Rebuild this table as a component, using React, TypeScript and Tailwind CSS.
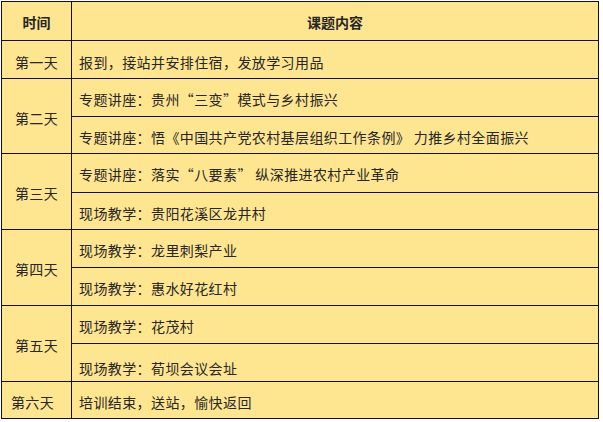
import React from "react";

const font = { fontFamily: '"Noto Sans CJK SC", "Noto Sans", sans-serif' };

function Cell({ children, className = "" }: { children?: React.ReactNode; className?: string }) {
  return <div className={`bg-[#fee590] flex items-center text-[14px] text-[#262626] tracking-[0.4px] ${className}`}>{children}</div>;
}

export default function App() {
  return (
    <div className="w-[603px] h-[422px] bg-white pt-px pl-px" style={font}>
      <div className="w-[598px] bg-[#111] p-px gap-px grid grid-cols-[69px_526px] grid-rows-[38px_37px_37px_36px_38px_36px_37px_37px_37px_37px_36px] leading-none">
        <Cell className="justify-center font-bold pt-px tracking-[0px]">时间</Cell>
        <Cell className="justify-center font-bold pt-px tracking-[0px]">课题内容</Cell>

        <Cell className="justify-center pt-[5px]">第一天</Cell>
        <Cell className="pl-[7px] pt-[5px]">报到，接站并安排住宿，发放学习用品</Cell>

        <Cell className="justify-center row-span-2 pt-[3px]">第二天</Cell>
        <Cell className="pl-[7px] pt-[3px]">专题讲座：贵州“三变”模式与乡村振兴</Cell>
        <Cell className="pl-[7px] pt-[3px]">专题讲座：悟《中国共产党农村基层组织工作条例》 力推乡村全面振兴</Cell>

        <Cell className="justify-center row-span-2 pt-[3px]">第三天</Cell>
        <Cell className="pl-[7px] pt-[2px]">专题讲座：落实“八要素” 纵深推进农村产业革命</Cell>
        <Cell className="pl-[7px] pt-[3px]">现场教学：贵阳花溪区龙井村</Cell>

        <Cell className="justify-center row-span-2 pt-[3px]">第四天</Cell>
        <Cell className="pl-[7px] pt-[3px]">现场教学：龙里刺梨产业</Cell>
        <Cell className="pl-[7px] pt-[3px]">现场教学：惠水好花红村</Cell>

        <Cell className="justify-center row-span-2 pt-[3px]">第五天</Cell>
        <Cell className="pl-[7px] pt-[3px]">现场教学：花茂村</Cell>
        <Cell className="pl-[7px] pt-[10px]">现场教学：荀坝会议会址</Cell>

        <Cell className="justify-center pr-[8px] pt-[3px]">第六天</Cell>
        <Cell className="pl-[7px] pt-[3px]">培训结束，送站，愉快返回</Cell>
      </div>
    </div>
  );
}
